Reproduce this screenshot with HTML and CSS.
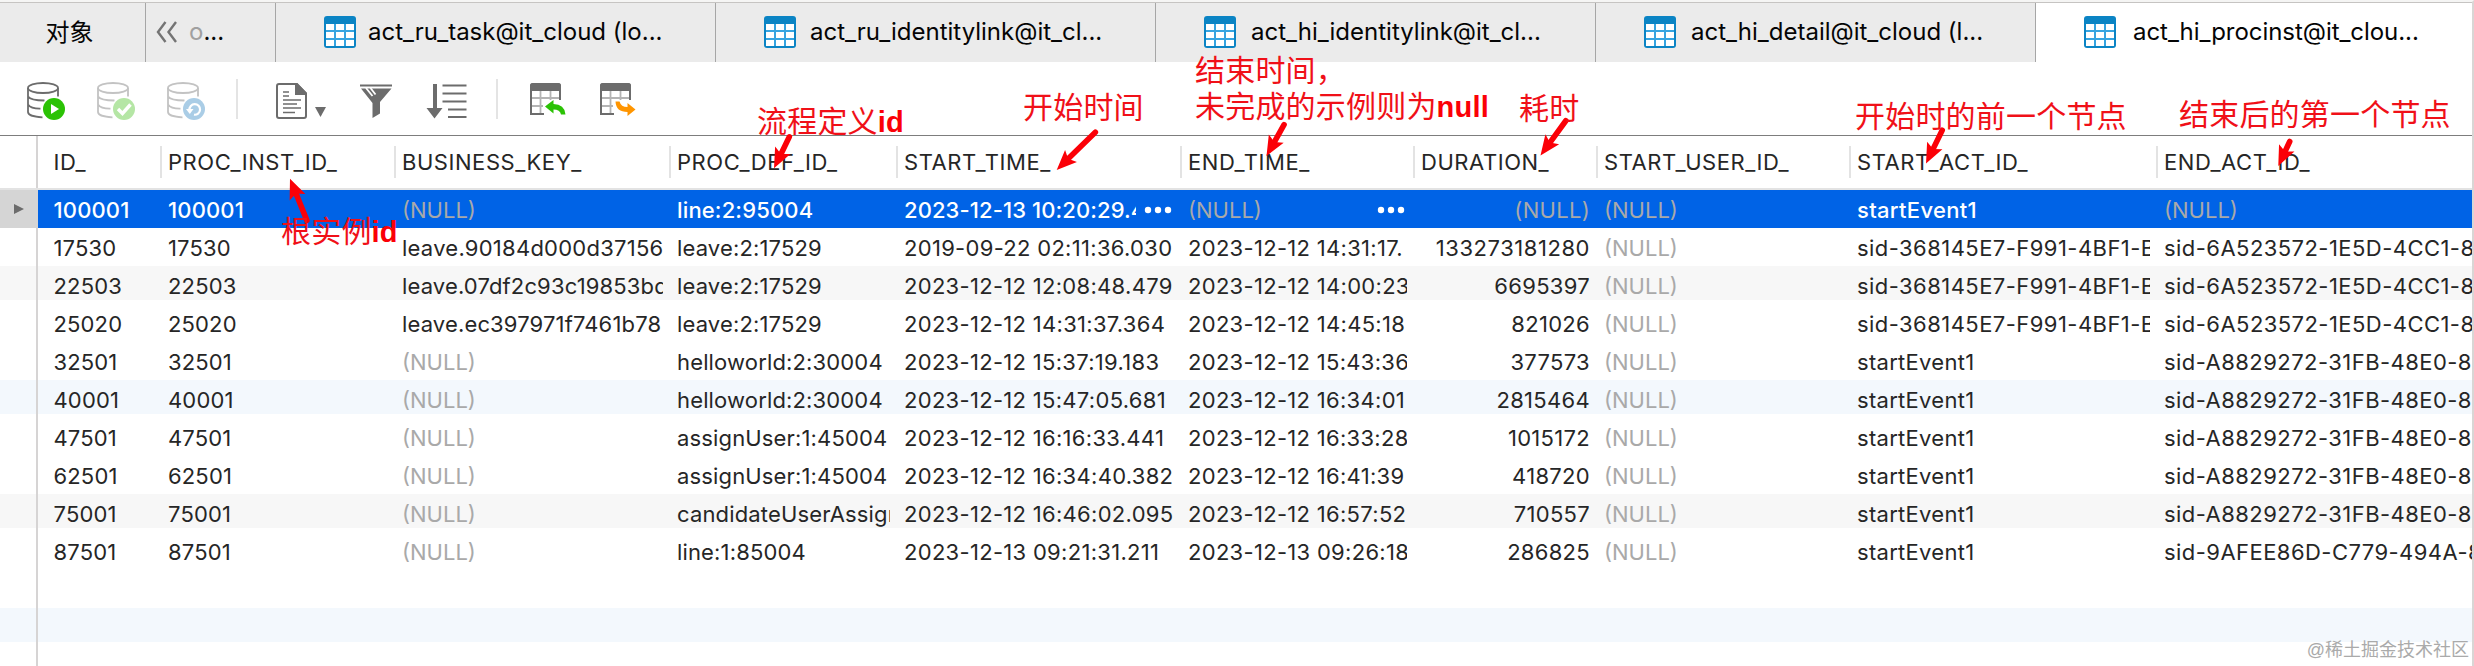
FILE: index.html
```
<!DOCTYPE html>
<html lang="zh">
<head>
<meta charset="utf-8">
<title>act_hi_procinst</title>
<link rel="stylesheet" href="styles.css">
</head>
<body>
<svg class="defs" width="0" height="0">
  <symbol id="tbl" viewBox="0 0 32 32"><rect width="32" height="32" rx="3" fill="#0b84c4"/><path d="M2 8h28v22H2z" fill="#36a4e0"/><path d="M2 8h8v6H2zM12 8h8v6h-8zM22 8h8v6h-8zM2 16h8v6H2zM12 16h8v6h-8zM22 16h8v6h-8zM2 24h8v6H2zM12 24h8v6h-8zM22 24h8v6h-8z" fill="#fff"/></symbol>
  <symbol id="db" viewBox="0 0 38 38"><g fill="none" stroke="currentColor" stroke-width="1.8"><ellipse cx="16" cy="6" rx="15" ry="5"/><path d="M1 6v24c0 3 6 5 14.500 5.300M31 6v8.500M1 14.500c2 3 8 4 16.500 4M1 22.500c2 3 7 4.300 12.500 4.200"/></g></symbol>
  <symbol id="grid" viewBox="0 0 38 38"><path d="M1 33V4q0-3 3-3h25q3 0 3 3v14h-2V9H3v22h12v2z" fill="#6c6c6c"/><path d="M1 9V4q0-3 3-3h25q3 0 3 3v5z" fill="#6c6c6c"/><path d="M3 16h27M3 24h11M11.500 9v22M21.500 9v9" stroke="#b4b4b4" stroke-width="1.800" fill="none"/></symbol>
</svg>
<div class="window">
  <nav class="tabs">
    <div class="tab objects">对象</div>
    <div class="tab overflow"><svg width="22" height="22" viewBox="0 0 22 22"><path d="M9.500 1L2 11l7.500 10M20 1l-7.500 10L20 21" fill="none" stroke="#747474" stroke-width="2.400"/></svg><span><i>o</i>...</span></div>
    <div class="tab"><svg class="ti"><use href="#tbl"/></svg><span class="t1">act_ru_task@it_cloud (lo...</span></div>
    <div class="tab"><svg class="ti"><use href="#tbl"/></svg><span>act_ru_identitylink@it_cl...</span></div>
    <div class="tab t3"><svg class="ti"><use href="#tbl"/></svg><span>act_hi_identitylink@it_cl...</span></div>
    <div class="tab t4"><svg class="ti"><use href="#tbl"/></svg><span>act_hi_detail@it_cloud (l...</span></div>
    <div class="tab active"><svg class="ti"><use href="#tbl"/></svg><span>act_hi_procinst@it_clou...</span></div>
  </nav>
  <div class="toolbar">
    <svg class="tool dark" viewBox="0 0 38 38"><use href="#db"/><circle cx="27" cy="27" r="12" fill="#fff"/><circle cx="27" cy="27" r="11" fill="#2bc205"/><path d="M24 22l8 5-8 5z" fill="#fff"/></svg>
    <svg class="tool pale" viewBox="0 0 38 38"><use href="#db"/><circle cx="27" cy="27" r="12" fill="#fff"/><circle cx="27" cy="27" r="11" fill="#b5e6a5"/><path d="M21 27l4.500 4.500 8-9" fill="none" stroke="#fff" stroke-width="3.400"/></svg>
    <svg class="tool pale" viewBox="0 0 38 38"><use href="#db"/><circle cx="27" cy="27" r="12" fill="#fff"/><circle cx="27" cy="27" r="11" fill="#aacde6"/><path d="M22.500 28a5.300 5.300 0 1 1 4.500 4.700" fill="none" stroke="#fff" stroke-width="2.200"/><path d="M19 27h7.500l-3.700 5z" fill="#fff"/></svg>
    <i class="sep s1"></i>
    <svg class="doc" viewBox="0 0 52 38"><path d="M3 2h18l9 9.500V34q0 2-2 2H3q-2 0-2-2V4q0-2 2-2z" fill="none" stroke="#6c6c6c" stroke-width="2"/><path d="M19 1h2l10 10v2H19z" fill="#6c6c6c"/><path d="M7 10h6M7 14h6M7 18h18M7 22h14M7 26h18M7 30.500h12" stroke="#6c6c6c" stroke-width="1.700"/><path d="M39 25h11l-5.500 10z" fill="#6c6c6c"/></svg>
    <svg class="funnel" viewBox="0 0 32 38"><path d="M0 2.500h32v2H0zM1 6.500h30.500L20 20v11.500L12.500 36V21z" fill="#6c6c6c"/><path d="M6 6l6.500 8M10.500 6l5 6.500" stroke="#fff" stroke-width="1.800"/></svg>
    <svg class="sort" viewBox="0 0 42 38"><path d="M7 2h4v24h5.500L8.500 36.500.500 26H7z" fill="#6c6c6c"/><path d="M16.500 3.500h24M16.500 11.500h24M16.500 19.500h24M22 27.500h18.500M22 35h18.500" stroke="#6c6c6c" stroke-width="1.800"/></svg>
    <i class="sep s2"></i>
    <svg class="tool imp" viewBox="0 0 38 38"><use href="#grid"/><path d="M16 24.500L24.500 18v4Q35.500 22 36.500 32.500h-4.500Q31 27.500 24.500 27.500V31.500z" fill="#2bc205"/></svg>
    <svg class="tool" viewBox="0 0 38 38"><use href="#grid"/><path d="M36.500 27.500L28.500 21v4Q22 25 20.500 19.500H16.500Q17 30 28.500 30v4z" fill="#ff9500"/></svg>
  </div>
  <div class="grid">
    <div class="row head"><b></b><span>ID_</span><span>PROC_INST_ID_</span><span>BUSINESS_KEY_</span><span>PROC_DEF_ID_</span><span>START_TIME_</span><span>END_TIME_</span><span>DURATION_</span><span>START_USER_ID_</span><span>START_ACT_ID_</span><span>END_ACT_ID_</span></div>
    <div class="row selected"><b><svg width="10" height="10"><path d="M0 0l10 5-10 5z" fill="#6c6c6c"/></svg></b><span>100001</span><span>100001</span><span class="n">(NULL)</span><span>line:2:95004</span><span class="more dt"><em>2023-12-13 10:20:29.4</em><svg width="28" height="8"><g fill="#fff"><circle cx="4" cy="4" r="3.200"/><circle cx="14" cy="4" r="3.200"/><circle cx="24" cy="4" r="3.200"/></g></svg></span><span class="n more"><em>(NULL)</em><svg width="28" height="8"><g fill="#fff"><circle cx="4" cy="4" r="3.200"/><circle cx="14" cy="4" r="3.200"/><circle cx="24" cy="4" r="3.200"/></g></svg></span><span class="n num">(NULL)</span><span class="n">(NULL)</span><span class="ev">startEvent1</span><span class="n">(NULL)</span></div>
    <div class="row"><b></b><span>17530</span><span>17530</span><span class="key">leave.90184d000d37156</span><span>leave:2:17529</span><span class="dt">2019-09-22 02:11:36.030</span><span class="dt">2023-12-12 14:31:17.</span><span class="num wide">133273181280</span><span class="n">(NULL)</span><span class="sid">sid-368145E7-F991-4BF1-B</span><span class="sid">sid-6A523572-1E5D-4CC1-8</span></div>
    <div class="row gray"><b></b><span>22503</span><span>22503</span><span>leave.07df2c93c19853bd</span><span>leave:2:17529</span><span class="dt">2023-12-12 12:08:48.479</span><span class="dt">2023-12-12 14:00:23</span><span class="num">6695397</span><span class="n">(NULL)</span><span class="sid">sid-368145E7-F991-4BF1-B</span><span class="sid">sid-6A523572-1E5D-4CC1-8</span></div>
    <div class="row"><b></b><span>25020</span><span>25020</span><span>leave.ec397971f7461b78</span><span>leave:2:17529</span><span class="dt">2023-12-12 14:31:37.364</span><span class="dt">2023-12-12 14:45:18</span><span class="num">821026</span><span class="n">(NULL)</span><span class="sid">sid-368145E7-F991-4BF1-B</span><span class="sid">sid-6A523572-1E5D-4CC1-8</span></div>
    <div class="row"><b></b><span>32501</span><span>32501</span><span class="n">(NULL)</span><span>helloworld:2:30004</span><span class="dt">2023-12-12 15:37:19.183</span><span class="dt">2023-12-12 15:43:36</span><span class="num">377573</span><span class="n">(NULL)</span><span class="ev">startEvent1</span><span class="sid">sid-A8829272-31FB-48E0-81</span></div>
    <div class="row blue"><b></b><span>40001</span><span>40001</span><span class="n">(NULL)</span><span>helloworld:2:30004</span><span class="dt">2023-12-12 15:47:05.681</span><span class="dt">2023-12-12 16:34:01</span><span class="num">2815464</span><span class="n">(NULL)</span><span class="ev">startEvent1</span><span class="sid">sid-A8829272-31FB-48E0-81</span></div>
    <div class="row"><b></b><span>47501</span><span>47501</span><span class="n">(NULL)</span><span>assignUser:1:45004</span><span class="dt">2023-12-12 16:16:33.441</span><span class="dt">2023-12-12 16:33:28</span><span class="num">1015172</span><span class="n">(NULL)</span><span class="ev">startEvent1</span><span class="sid">sid-A8829272-31FB-48E0-81</span></div>
    <div class="row"><b></b><span>62501</span><span>62501</span><span class="n">(NULL)</span><span>assignUser:1:45004</span><span class="dt">2023-12-12 16:34:40.382</span><span class="dt">2023-12-12 16:41:39</span><span class="num">418720</span><span class="n">(NULL)</span><span class="ev">startEvent1</span><span class="sid">sid-A8829272-31FB-48E0-81</span></div>
    <div class="row gray"><b></b><span>75001</span><span>75001</span><span class="n">(NULL)</span><span>candidateUserAssign</span><span class="dt">2023-12-12 16:46:02.095</span><span class="dt">2023-12-12 16:57:52</span><span class="num">710557</span><span class="n">(NULL)</span><span class="ev">startEvent1</span><span class="sid">sid-A8829272-31FB-48E0-81</span></div>
    <div class="row"><b></b><span>87501</span><span>87501</span><span class="n">(NULL)</span><span>line:1:85004</span><span class="dt">2023-12-13 09:21:31.211</span><span class="dt">2023-12-13 09:26:18</span><span class="num">286825</span><span class="n">(NULL)</span><span class="ev">startEvent1</span><span class="sid">sid-9AFEE86D-C779-494A-8</span></div>
    <div class="row"><b></b></div>
    <div class="row blue"><b></b></div>
    <div class="row last"><b></b></div>
  </div>
</div>
<svg class="arrows" width="2474" height="666" viewBox="0 0 2474 666">
  <g fill="#fb0007" stroke-linecap="round">
    <g transform="translate(290 178.700) rotate(68)"><path d="M0 0l20-8.500-4 8.500 4 8.500z"/><path d="M16 0h29"/></g>
    <g transform="translate(774 168.300) rotate(-64)"><path d="M0 0l20-8.500-4 8.500 4 8.500z"/><path d="M16 0h19"/></g>
    <g transform="translate(1056.700 170) rotate(-44.300)"><path d="M0 0l20-8.500-4 8.500 4 8.500z"/><path d="M16 0h38"/></g>
    <g transform="translate(1266.500 156) rotate(-60.800)"><path d="M0 0l20-8.500-4 8.500 4 8.500z"/><path d="M16 0h20"/></g>
    <g transform="translate(1540.500 155.500) rotate(-53.900)"><path d="M0 0l20-8.500-4 8.500 4 8.500z"/><path d="M16 0h27"/></g>
    <g transform="translate(1926 163.500) rotate(-64)"><path d="M0 0l20-8.500-4 8.500 4 8.500z"/><path d="M16 0h21"/></g>
    <g transform="translate(2278.300 166) rotate(-65)"><path d="M0 0l20-8.500-4 8.500 4 8.500z"/><path d="M16 0h11"/></g>
  </g>
</svg>
<div class="note n1">根实例<b>id</b></div>
<div class="note n2">流程定义<b>id</b></div>
<div class="note n3">开始时间</div>
<div class="note n4">结束时间，<br>未完成的示例则为<b>null</b></div>
<div class="note n5">耗时</div>
<div class="note n6">开始时的前一个节点</div>
<div class="note n7">结束后的第一个节点</div>
<div class="watermark">@稀土掘金技术社区</div>
</body>
</html>
```
FILE: styles.css
```
* { box-sizing: border-box; }
body { margin: 0; width: 2474px; height: 666px; overflow: hidden; position: relative; background: #fff; font-family: Inter, "Noto Sans CJK SC", sans-serif; color: #262626; }
.defs { position: absolute; }
.window { height: 666px; border-right: 2px solid #d9d6d5; border-top: 2px solid #f5f5f4; display: flex; flex-direction: column; }

.tabs { display: flex; height: 60px; flex: none; border-top: 1px solid #c6c4c2; background: #ebebeb; color: #050505; font-size: 24px; }
.tab { width: 440px; flex: none; border-right: 1px solid #a6a6a6; padding: 0 0 1px 48px; display: flex; align-items: center; gap: 14px; white-space: nowrap; }
.tab > span { margin-top: -2px; }
.tab .t1 { letter-spacing: 0; margin-left: -2px; }
.tab.t3 { gap: 15px; }
.tab.t4 { gap: 15px; }
.ti { width: 32px; height: 32px; flex: none; }
.tab.objects { width: 146px; padding: 0 6px 4px 0; justify-content: center; }
.tab.overflow { width: 130px; padding-left: 10px; gap: 11px; }
.overflow i { font-style: normal; color: #a0a0a0; }
.tab.active { width: auto; flex: 1; background: #fff; border: 0; gap: 17px; letter-spacing: -0.05px; }

.toolbar { height: 74px; flex: none; border-bottom: 1px solid #7d7d7d; display: flex; align-items: center; padding: 5px 0 0 27px; }
.toolbar svg { flex: none; }
.tool { width: 38px; height: 38px; margin-right: 32px; }
.dark { color: #6c6c6c; }
.pale { color: #c3c3c3; }
.sep { width: 2px; height: 40px; background: #e4e4e4; flex: none; margin-top: -4px; }
.s1 { margin: -4px 38px 0 -1px; }
.doc { width: 52px; height: 38px; margin-right: 32px; }
.funnel { width: 32px; height: 38px; margin-right: 34px; }
.sort { width: 42px; height: 38px; margin-right: 28px; }
.s2 { margin-right: 31px; }

.grid { flex: 1; overflow: hidden; font-size: 22px; line-height: 36px; letter-spacing: 0.15px; }
.row { display: grid; grid-template-columns: 38px 123px 234px 275px 227px 284px 233px 183px 253px 307px 315px; height: 38px; background: linear-gradient(var(--stripe, #fff) 34px, #fff 34px); }
.row > b { border-right: 2px solid #d6d4d4; display: flex; align-items: center; justify-content: center; }
.row > span { margin: 0 7px 0 7px; padding-top: 2px; overflow: hidden; white-space: nowrap; }
.row > span:nth-child(2) { margin-left: 15.5px; }
.row > span:last-child { margin-right: 0; }
.gray { --stripe: #f7f7f7; }
.blue { --stripe: #f3f8fd; }
.last { height: 30px; }
.row .n { color: #a9a9a9; letter-spacing: 0; }
.row .key { letter-spacing: 0.25px; }
.row .dt { letter-spacing: 0.3px; }
.row .sid { letter-spacing: 0.45px; }
.row .ev { letter-spacing: 0.3px; }
.row .num { text-align: right; letter-spacing: 0.3px; }
.row .wide { letter-spacing: 0.55px; }

.row.head { height: 54px; border-bottom: 2px solid #e3e3e3; letter-spacing: 0.55px; }
.head > span { position: relative; line-height: 52px; padding: 0; overflow: visible; }
.head > span + span::before { content: ""; position: absolute; left: -8px; top: 10px; width: 2px; height: 32px; background: #e3e3e3; }

.row.selected { background: #0063e6; color: #fff; font-weight: 500; }
.selected > b { background: #d5d5d5; border-color: #d5d5d5; padding-left: 2px; }
.selected .n { font-weight: 400; }
.selected .more { display: flex; align-items: center; margin-right: 9px; }
.selected .dt { letter-spacing: 0.1px; }
.more em { font-style: normal; overflow: hidden; flex: 1; margin-right: 8px; }

.arrows { position: absolute; left: 0; top: 0; stroke: none; }
.arrows path + path { stroke: #fb0007; stroke-width: 5.6px; }
.note { position: absolute; font-family: "Liberation Sans", "Noto Sans CJK SC", sans-serif; font-size: 30px; line-height: 36px; letter-spacing: 0.2px; color: #f01018; white-space: nowrap; font-weight: 400; }
.note b { font-size: 29px; font-weight: 700; color: #fb0007; }
.n1 { left: 281px; top: 214px; }
.n2 { left: 757px; top: 104px; }
.n3 { left: 1023px; top: 90px; }
.n4 { left: 1195px; top: 53px; }
.n5 { left: 1519px; top: 91px; }
.n6 { left: 1855px; top: 99px; }
.n7 { left: 2179px; top: 97px; }
.watermark { position: absolute; right: 5px; bottom: 3px; font: 18px/26px "Liberation Sans", "Noto Sans CJK SC", sans-serif; color: #aaa; }
```
